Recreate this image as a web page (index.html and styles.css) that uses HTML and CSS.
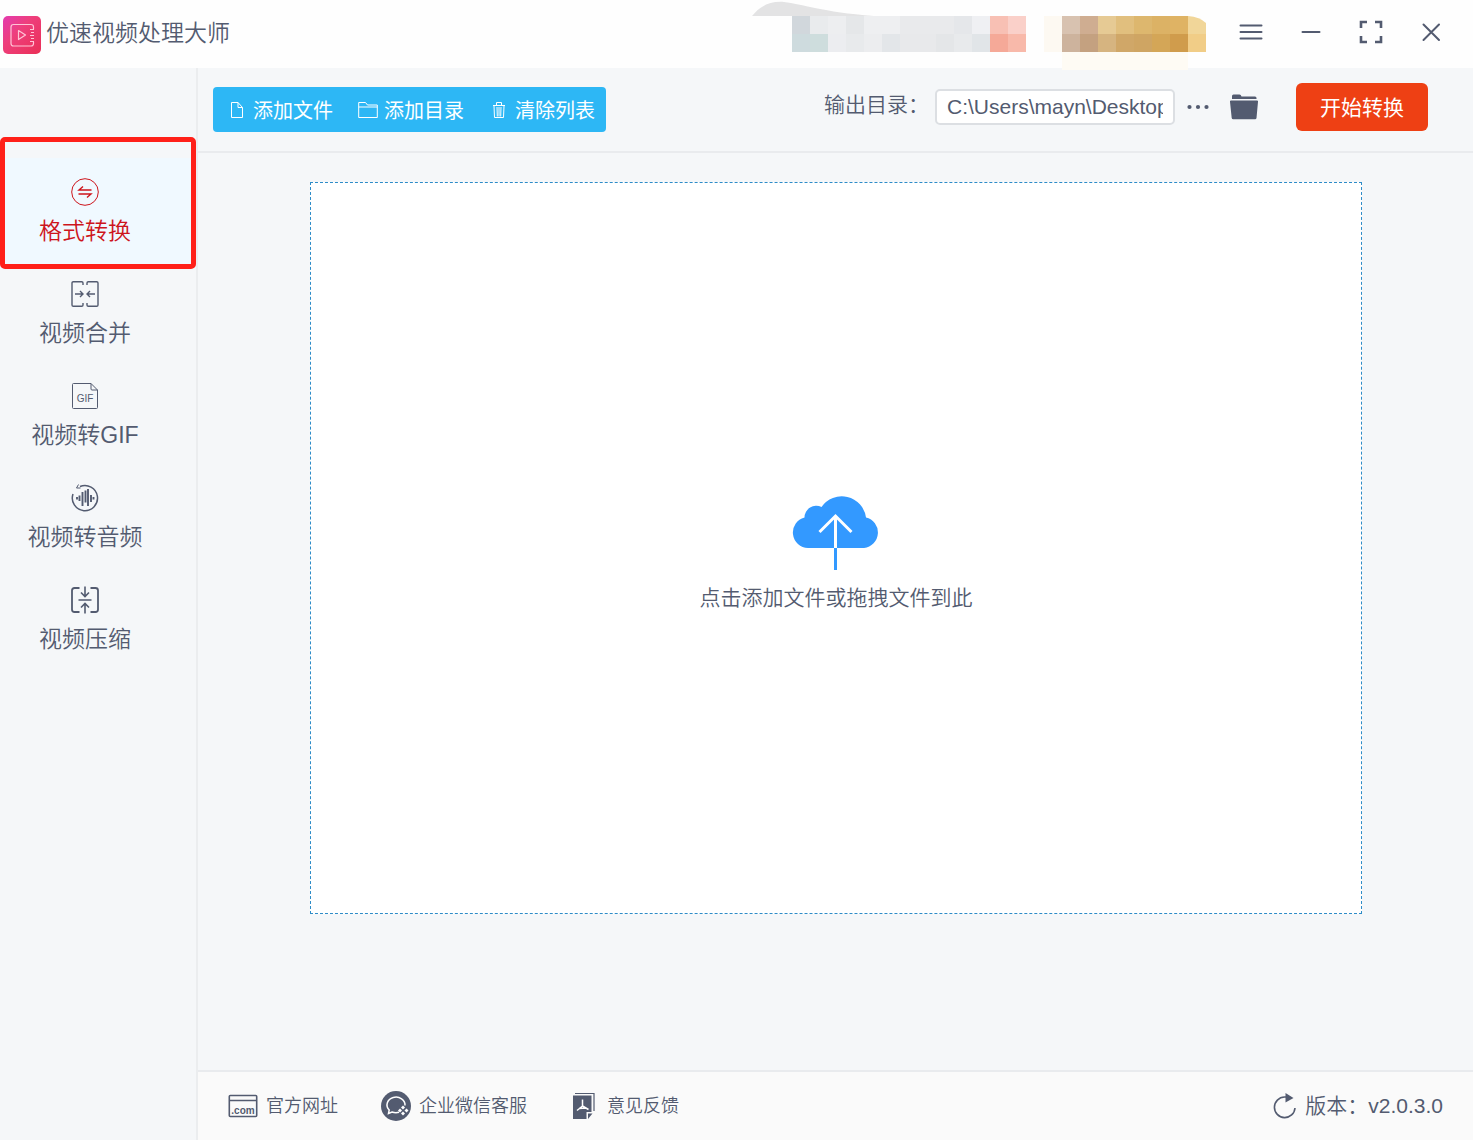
FILE: index.html
```html
<!DOCTYPE html>
<html lang="zh-CN">
<head>
<meta charset="utf-8">
<title>优速视频处理大师</title>
<link rel="stylesheet" href="styles.css">
</head>
<body>
<div class="app">
  <header class="titlebar">
    <svg class="logo" viewBox="0 0 38 38" aria-hidden="true">
      <defs><linearGradient id="logo-fill" x1="0" y1="0" x2="1" y2="1"><stop offset="0" stop-color="#e33bb0"/><stop offset=".4" stop-color="#ee3f7c"/><stop offset="1" stop-color="#ea2f56"/></linearGradient></defs>
      <rect width="38" height="38" rx="5" fill="url(#logo-fill)"/>
      <g fill="none" stroke="#ffc4d6" stroke-width="1.200" stroke-linejoin="round"><path d="M30.500 13V11q0-2.500-2.500-2.500H10.500Q8 8.500 8 11v16.500Q8 30 10.500 30H28q2.500 0 2.500-2.500V26M27 13.500h4M28 16.500h3M27 19.500h4M28 22.500h3M27 25.500h4"/><path d="M15.500 14.500l7 4.500-7 4.500z"/></g>
    </svg>
    <h1 class="app-name">优速视频处理大师</h1>
    <svg class="mosaic" viewBox="0 0 454 70" aria-hidden="true">
      <path d="M0 16C8 6 18 1 32 2C50 4 70 12 122 16z" fill="#e3e3e4"/>
      <g>
        <path fill="#d1d7dc" d="M40 16h18v18H40z"/><path fill="#e9ebed" d="M58 16h18v18H58z"/><path fill="#edeef0" d="M76 16h18v18H76z"/><path fill="#e5e7e9" d="M94 16h18v18H94z"/><path fill="#eeeff1" d="M112 16h36v18h-36z"/><path fill="#e9eaec" d="M148 16h54v18h-54z"/><path fill="#e5e7ea" d="M202 16h18v18h-18z"/><path fill="#eff0f3" d="M220 16h18v18h-18z"/><path fill="#f8c0b4" d="M238 16h18v18h-18z"/><path fill="#fad0c9" d="M256 16h18v18h-18z"/>
        <path fill="#cedbde" d="M40 34h18v18H40z"/><path fill="#cedddd" d="M58 34h18v18H58z"/><path fill="#ecedf0" d="M76 34h18v18H76z"/><path fill="#e8eaec" d="M94 34h18v18H94z"/><path fill="#ecedef" d="M112 34h18v18h-18z"/><path fill="#e3e6e9" d="M130 34h18v18h-18z"/><path fill="#e8e9eb" d="M148 34h36v18h-36z"/><path fill="#e4e6e8" d="M184 34h18v18h-18z"/><path fill="#e8eaec" d="M202 34h18v18h-18z"/><path fill="#e1e5e8" d="M220 34h18v18h-18z"/><path fill="#f5a998" d="M238 34h18v18h-18z"/><path fill="#f8b9aa" d="M256 34h18v18h-18z"/>
      </g>
      <path fill="#fdf9f2" d="M292 16h18v36h-18z"/>
      <g>
        <path fill="#d8c2b0" d="M310 16h18v18h-18z"/><path fill="#cfad91" d="M328 16h18v18h-18z"/><path fill="#e6ca94" d="M346 16h18v18h-18z"/><path fill="#e1bf7e" d="M364 16h18v18h-18z"/><path fill="#ddb76e" d="M382 16h18v18h-18z"/><path fill="#dcb265" d="M400 16h18v18h-18z"/><path fill="#dfb364" d="M418 16h18v18h-18z"/><path fill="#f1d699" d="M436 16q12 1 18 7v11h-18z"/>
        <path fill="#cdb39d" d="M310 34h18v18h-18z"/><path fill="#c4a180" d="M328 34h18v18h-18z"/><path fill="#d6b480" d="M346 34h18v18h-18z"/><path fill="#d0a768" d="M364 34h18v18h-18z"/><path fill="#cfa563" d="M382 34h18v18h-18z"/><path fill="#d4a657" d="M400 34h18v18h-18z"/><path fill="#d09c4c" d="M418 34h18v18h-18z"/><path fill="#f1cd87" d="M436 34h18v18h-18z"/>
      </g>
      <path fill="#fefbf4" d="M310 52h126v18H310z"/>
    </svg>
    <div class="window-controls">
      <button type="button" aria-label="菜单"><svg viewBox="0 0 24 24"><path d="M1.500 5.500h21M1.500 12h21M1.500 18.500h21" stroke-linecap="round"/></svg></button>
      <button type="button" aria-label="最小化"><svg viewBox="0 0 24 24"><path d="M3.500 12h17" stroke-linecap="round"/></svg></button>
      <button type="button" aria-label="全屏"><svg viewBox="0 0 24 24"><path stroke-width="2.600" d="M2 8V2h6M16 2h6V8M22 16v6h-6M8 22H2V16"/></svg></button>
      <button type="button" aria-label="关闭"><svg viewBox="0 0 24 24"><path d="M4.500 4.500l15.500 15.500M20 4.500L4.500 20" stroke-linecap="round"/></svg></button>
    </div>
  </header>

  <div class="body">
    <nav class="sidebar">
      <a class="nav-item active" href="#convert">
        <svg viewBox="0 0 28 28"><circle cx="14" cy="14" r="13.300"/><path stroke-width="1.400" d="M20.500 12H8l4-3.500M7.500 16H20l-4 3.500"/></svg>
        <span>格式转换</span>
      </a>
      <a class="nav-item" href="#merge">
        <svg viewBox="0 0 28 28"><path stroke-width="1.400" d="M12 5V3q0-1.300-1.300-1.300H2.300Q1 1.700 1 3v22q0 1.300 1.300 1.300h8.400Q12 26.300 12 25v-2M16 5V3q0-1.300 1.300-1.300h8.400Q27 1.700 27 3v22q0 1.300-1.300 1.300h-8.400Q16 26.300 16 25v-2M4 14h8M9 11l3 3-3 3M24 14h-8M19 11l-3 3 3 3"/></svg>
        <span>视频合并</span>
      </a>
      <a class="nav-item" href="#gif">
        <svg viewBox="0 0 28 28"><path d="M20 1.500H2.500q-1 0-1 1v23q0 1 1 1h23q1 0 1-1V8zM20 1.500V7q0 1 1 1h5.500"/><text x="14" y="20" class="gif-text">GIF</text></svg>
        <span>视频转GIF</span>
      </a>
      <a class="nav-item" href="#audio">
        <svg viewBox="0 0 28 28"><path stroke-width="1.500" d="M9 2.500A12.600 12.600 0 1 1 2 10"/><path d="M7.500.5L5.500 4h4"/><path stroke-width="1.900" d="M6 13v2.500M8.500 11.500V17M11.500 8v14M14.500 6.500v12M17 5v17M20 11v7M22.500 13v2.500"/></svg>
        <span>视频转音频</span>
      </a>
      <a class="nav-item" href="#compress">
        <svg viewBox="0 0 28 28"><path stroke-width="1.800" d="M8.500 2H3.500Q1 2 1 4.500v19Q1 26 3.500 26h5M19.500 2h5Q27 2 27 4.500v19q0 2.500-2.500 2.500h-5"/><path stroke-width="1.600" d="M7.500 14h13M14 .5V10M10 6.500l4 4 4-4M14 27.500V18M10 21.500l4-4 4 4"/></svg>
        <span>视频压缩</span>
      </a>
      <div class="highlight"></div>
    </nav>

    <main class="main">
      <div class="toolbar">
        <div class="file-actions">
          <button type="button"><svg viewBox="0 0 20 20"><path d="M11 2.500H4.500v15h11V7.500zM11 2.500v5h4.500"/></svg>添加文件</button>
          <button type="button"><svg viewBox="0 0 20 20"><path d="M.7 17.500v-15h6.800l2 2.500h9.800v12.500zM.7 7h18.600"/></svg>添加目录</button>
          <button type="button"><svg viewBox="0 0 20 20"><path d="M4 5.500h12M7.500 5V2.500h5V5M5 6l.5 11.500h9l.5-11.500M8 7l.3 9.500M10 7v9.500M12 7l-.3 9.500"/></svg>清除列表</button>
        </div>
        <div class="output">
          <label for="outdir">输出目录：</label>
          <input id="outdir" type="text" value="C:\Users\mayn\Desktop">
          <button class="icon-button more" type="button" aria-label="更多"><svg width="22" height="6" viewBox="0 0 22 6"><circle cx="2.500" cy="3" r="2.100"/><circle cx="11" cy="3" r="2.100"/><circle cx="19.500" cy="3" r="2.100"/></svg></button>
          <button class="icon-button folder" type="button" aria-label="打开目录"><svg width="28" height="26" viewBox="0 0 28 26"><path d="M2 5V2q0-1.500 1.500-1.500h6Q11 .5 11.500 2.500H25q1.500 0 1.500 1.500v1zM1 6.500h26q1.200 0 1 1.200L26.500 24q-.2 1.300-1.500 1.300H3.200q-1.300 0-1.500-1.300L0 7.700Q-.2 6.500 1 6.500z"/></svg></button>
          <button class="start" type="button">开始转换</button>
        </div>
      </div>

      <section class="workspace">
        <button class="dropzone" type="button">
          <svg width="88" height="76" viewBox="0 0 88 76" aria-hidden="true">
            <path fill="#3399ff" d="M16 53a15.500 15.500 0 0 1-3.500-30.500A11.800 11.800 0 0 1 29.500 12A24.500 24.500 0 0 1 74 22.500A15.500 15.500 0 0 1 72 53z"/>
            <path fill="none" stroke="#fff" stroke-width="3" d="M43.500 53V21M27.500 37l16-16 16 16"/>
            <path fill="#3399ff" d="M42 53h3v22h-3z"/>
          </svg>
          <span>点击添加文件或拖拽文件到此</span>
        </button>
      </section>

      <footer class="footer">
        <a class="site" href="#site"><svg width="30" height="30" viewBox="0 0 30 30"><path fill="none" stroke="currentColor" stroke-width="1.600" d="M2.300 4.500h25.400q1 0 1 1v19q0 1-1 1H2.300q-1 0-1-1v-19q0-1 1-1zM1.300 9.500h27.400"/><text class="com-text" x="15" y="22.500">.com</text></svg><span>官方网址</span></a>
        <a class="service" href="#service"><svg width="30" height="30" viewBox="0 0 30 30"><circle cx="15" cy="15" r="15" fill="currentColor"/><path fill="none" stroke="#fff" stroke-width="1.500" d="M18 21.300q-3.500 1-7-.3L7.500 22.500l.7-3.500A9 7.800 0 1 1 24 14.500"/><path fill="#fff" d="M22 14.500l2 2-2 2-2-2zM25.500 17.500l2 2-2 2-2-2zM22 20.500l2 2-2 2-2-2zM19 17.500l2 2-2 2-2-2z"/></svg><span>企业微信客服</span></a>
        <a class="feedback" href="#feedback"><svg width="22" height="28" viewBox="0 0 22 28"><path fill="currentColor" d="M0 3.500h18.500V20h-5v7H0z"/><path fill="none" stroke="currentColor" stroke-width="1.200" d="M2 1.500h19V19"/><path fill="currentColor" d="M15 21.500h4.500L15 27z"/><path fill="none" stroke="#fff" stroke-width="1.500" d="M9.500 7.500v6.500L4 18.500M9.500 14l6 3.500M6 16.500l7-.5"/></svg><span>意见反馈</span></a>
        <div class="version"><svg width="24" height="28" viewBox="0 0 24 28"><path fill="none" stroke="currentColor" stroke-width="1.600" d="M13 5H11.500A10.300 10.300 0 1 0 22 16"/><path fill="currentColor" d="M12.500 1l8 5-8 4.500z"/></svg><span>版本：v2.0.3.0</span></div>
      </footer>
    </main>
  </div>
</div>
</body>
</html>
```
FILE: styles.css
```css
* {
  box-sizing: border-box;
}

body {
  margin: 0;
  color: #535b70;
  background: #f5f7f9;
  font-family: "Liberation Sans", "Noto Sans CJK SC", sans-serif;
  font-weight: 350;
}

button,
input {
  margin: 0;
  padding: 0;
  border: 0;
  background: none;
  color: inherit;
  font: inherit;
}

a {
  color: inherit;
  text-decoration: none;
}

svg {
  flex: none;
  display: block;
}

.app {
  display: flex;
  flex-direction: column;
  min-height: 100vh;
}

/* Title bar */
.titlebar {
  display: flex;
  align-items: flex-start;
  height: 68px;
  padding: 0 12px 0 3px;
  background: #fefefe;
}

.logo {
  width: 38px;
  height: 38px;
  margin-top: 16px;
}

.app-name {
  margin: 16px 0 0 5px;
  font-size: 23px;
  font-weight: 350;
  line-height: 34px;
}

.mosaic {
  width: 454px;
  height: 70px;
  margin: 0 15px 0 auto;
}

.window-controls {
  display: flex;
  height: 64px;
}

.window-controls button {
  display: grid;
  place-items: center;
  width: 60px;
}

.window-controls svg {
  width: 24px;
  height: 24px;
  fill: none;
  stroke: currentColor;
  stroke-width: 2;
}

.body {
  display: flex;
  flex: 1;
}

/* Sidebar */
.sidebar {
  position: relative;
  width: 198px;
  padding-top: 90px;
  border-right: 2px solid #ebedef;
}

.nav-item {
  display: flex;
  flex-direction: column;
  align-items: center;
  gap: 8px;
  height: 102px;
  padding: 20px 26px 0 0;
  font-size: 23px;
  line-height: 34px;
}

.nav-item svg {
  width: 28px;
  height: 28px;
  fill: none;
  stroke: currentColor;
  stroke-width: 1;
}

.nav-item.active {
  height: 108px;
  margin-bottom: -6px;
  color: #cd151c;
  background: #f0f9ff;
}

.nav-item .gif-text {
  fill: currentColor;
  stroke: none;
  font-size: 10px;
  text-anchor: middle;
}

.highlight {
  position: absolute;
  top: 69px;
  left: 0;
  width: 196px;
  height: 132px;
  border: 5px solid #ff2019;
  border-radius: 5px;
  pointer-events: none;
}

/* Main column */
.main {
  display: flex;
  flex: 1;
  flex-direction: column;
  min-width: 0;
}

.toolbar {
  display: flex;
  align-items: center;
  justify-content: space-between;
  height: 85px;
  padding: 0 45px 0 15px;
  border-bottom: 2px solid #e9ebee;
}

.file-actions {
  display: flex;
  height: 45px;
  border-radius: 4px;
  color: #fff;
  background: #2db7f5;
}

.file-actions button {
  display: flex;
  align-items: center;
  gap: 6px;
  padding: 0 11px 0 14px;
  font-size: 20px;
  font-weight: 400;
}

.file-actions svg {
  width: 20px;
  height: 20px;
  fill: none;
  stroke: currentColor;
  stroke-width: 1;
}

.output {
  display: flex;
  align-items: center;
  padding-bottom: 5px;
  font-size: 21px;
}

.output label {
  padding: 0 6px 8px 0;
}

.output input {
  width: 240px;
  height: 36px;
  padding: 0 10px;
  border: 2px solid #dcdfe3;
  border-radius: 5px;
  background: #fff;
}

.icon-button svg {
  fill: currentColor;
}

.more {
  margin-left: 12px;
}

.folder {
  margin-left: 21px;
}

.start {
  width: 132px;
  height: 48px;
  margin-left: 38px;
  padding-bottom: 2px;
  border-radius: 6px;
  color: #fff;
  background: #ee4014;
  font-weight: 400;
}

.workspace {
  display: flex;
  flex: 1;
  padding: 29px 111px 156px 112px;
}

.dropzone {
  display: flex;
  flex: 1;
  flex-direction: column;
  align-items: center;
  justify-content: center;
  gap: 10px;
  padding-top: 14px;
  border: 1px dashed #2d8cc8;
  background: #fff;
  font-size: 21px;
  line-height: 34px;
}

/* Footer */
.footer {
  display: flex;
  align-items: center;
  height: 70px;
  padding: 0 30px;
  border-top: 2px solid #e9ebee;
  background: #fafafa;
  font-size: 18px;
}

.footer a,
.version {
  display: flex;
  align-items: center;
  gap: 8px;
}

.footer span {
  padding-bottom: 4px;
}

.service {
  margin-left: 43px;
}

.feedback {
  margin-left: 46px;
}

.footer .feedback {
  gap: 12px;
}

.version {
  margin-left: auto;
  font-size: 21px;
}

.com-text {
  fill: currentColor;
  font-size: 10px;
  font-weight: 700;
  text-anchor: middle;
}
```
